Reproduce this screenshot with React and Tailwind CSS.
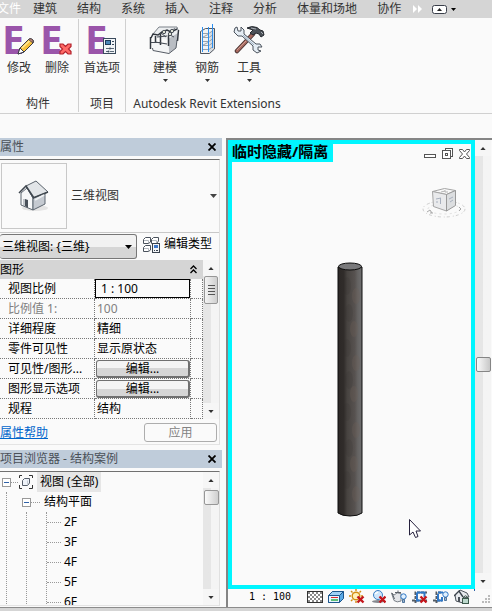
import { useState } from 'react'
import clsx from 'clsx'

const MENU_TABS = ['建筑', '结构', '系统', '插入', '注释', '分析', '体量和场地', '协作']

const FLOORS = ['2F', '3F', '4F', '5F', '6F']

const PROPERTIES = [
  { label: '视图比例', value: '1 : 100', type: 'input' },
  { label: '比例值 1:', value: '100', type: 'disabled' },
  { label: '详细程度', value: '精细', type: 'text' },
  { label: '零件可见性', value: '显示原状态', type: 'text' },
  { label: '可见性/图形...', value: '编辑...', type: 'button' },
  { label: '图形显示选项', value: '编辑...', type: 'button' },
  { label: '规程', value: '结构', type: 'text' },
]

/* ---------- ribbon icons ---------- */

function LetterE({ children }) {
  return (
    <svg width="32" height="32" viewBox="0 0 32 32" className="overflow-visible" aria-hidden="true">
      <text x="-1" y="30" fontSize="40" fontWeight="700" fontFamily="Noto Sans, sans-serif" fill="#9a55aa">E</text>
      {children}
    </svg>
  )
}

function ModifyIcon() {
  return (
    <LetterE>
      <path d="M15 30 L17 24 L26 15 Q28 14 30 16 Q31 18 30 19 L21 28 Z" fill="#f7c13c" stroke="#3b3b45" />
      <path d="M15 30 L17 24 L21 28 Z" fill="#fff" stroke="#3b3b45" />
      <path d="M19 24 L27 16.500" stroke="#fde89a" strokeWidth="1.500" />
      <path d="M26 15 Q28 14 30 16 L30 19 L25.500 15.500 Z" fill="#c98a78" stroke="#3b3b45" strokeWidth="0.800" />
    </LetterE>
  )
}

function DeleteIcon() {
  return (
    <LetterE>
      <path d="M19 20 L22 20 L24.500 22.500 L27 20 L30 20 L30 22.500 L27.500 25 L30 27.500 L30 30 L27 30 L24.500 27.500 L22 30 L19 30 L19 27.500 L21.500 25 L19 22.500 Z" fill="#ff6a66" stroke="#b3222c" strokeWidth="1.200" />
    </LetterE>
  )
}

function PreferenceIcon() {
  return (
    <LetterE>
      <rect x="17.500" y="14.500" width="12" height="15" fill="#f2f5f8" stroke="#3a4a5c" />
      <rect x="19.500" y="16.500" width="5" height="4" fill="#4a86b8" stroke="#1d3c5a" />
      <path d="M26 17.500h2M26 20.500h2" stroke="#3a4a5c" />
      <path d="M20 24.500h3M25 24.500h3M20 27.500h2M24 27.500h4" stroke="#5c6b7a" />
      <circle cx="24" cy="24.500" r="1" fill="#3a4a5c" />
      <circle cx="22.500" cy="27.500" r="1" fill="#3a4a5c" />
    </LetterE>
  )
}

function ModelIcon() {
  return (
    <svg width="32" height="32" viewBox="0 0 32 32" fill="none" aria-hidden="true">
      <path d="M3 12 L9 3 L28 3 L28 12 L19 16 Z" fill="#eceef0" />
      <path d="M19 15 L29 9 L27 24 L20 29 Z" fill="#b9bdc3" />
      <path d="M2 18 L19 19 L20 29 L4 26 Z" fill="#f4f5f6" />
      <path d="M4 10 L10 3 H28 L29 6 M20 9 L26 4" stroke="#7b8189" />
      <path d="M2 14 L4 10 L9 11 L13 8 L18 6 L22 8 L28 5" stroke="#32373f" strokeWidth="1.500" />
      <path d="M1.500 13 V25 M6.500 12 V19 M11.500 10 V21 M19.500 11 V22 M29.500 6 L28.500 17" stroke="#32373f" strokeWidth="1.500" />
      <path d="M2 18.500 H12 M6 18 L18 20 M8 13 L18 12" stroke="#454b54" strokeWidth="1.200" />
      <path d="M12 9 L17 13 M19 10 L25 13" stroke="#454b54" />
      <circle cx="15" cy="8" r="1.700" fill="#dfe2d4" stroke="#4b515a" />
      <circle cx="21" cy="10" r="1.700" fill="#dfe2d4" stroke="#4b515a" />
      <circle cx="23" cy="7" r="1.700" fill="#dfe2d4" stroke="#4b515a" />
      <path d="M3.500 24 L4 26.500 L20 29.500 L27 24 L28 16" stroke="#565c65" />
    </svg>
  )
}

function RebarIcon() {
  return (
    <svg width="32" height="32" viewBox="0 0 32 32" fill="none" aria-hidden="true">
      <path d="M9.500 7.500 L14.500 4.500 H23.500 V25 L18.500 29.500 H9.500 Z" fill="#f1f3f5" />
      <path d="M18.500 8 L23.500 4.500 V25 L18.500 29.500 Z" fill="#d7dbdf" />
      <path d="M9.500 29.500 V7.500 L14.500 4.500 H23.500 V25 L18.500 29.500 H9.500" stroke="#50565f" />
      <path d="M12 9.500h6l4-3M12 13.500h6l4-3M12 17.500h6l4-3M12 21.500h6l4-3M12 25.500h6l4-3M12 13l6-3M12 21l6-3" stroke="#9aa3ad" />
      <path d="M11.500 3 V28 M17.500 3 V28 M21.500 0 V24" stroke="#2c8ff0" />
    </svg>
  )
}

function ToolsIcon() {
  return (
    <svg width="32" height="32" viewBox="0 0 32 32" fill="none" aria-hidden="true">
      <path d="M4 27 L20 10" stroke="#43302f" strokeWidth="4.500" strokeLinecap="round" />
      <path d="M4 27 L20 10" stroke="#a7695f" strokeWidth="2.800" strokeLinecap="round" />
      <path d="M4 26 L13 17" stroke="#d09c91" />
      <path d="M14 4 Q19 1.500 24 3.500 L27 6 L30 7 L31 11 L28 13 L26 10 L23 9 L20 11 L17 9 L20 6 Z" fill="#4c5158" stroke="#25292f" />
      <path d="M18 4 L23 5 M28 8 L30 10" stroke="#aab0b6" />
      <path d="M1 8 L2 4 L4 3 L5 7 L8 7 L8 3 L11 6 L11 10 L23 20 L27 20 L29 23 L25 23 L25 26 L28 27 L24 29 L20 26 L20 22 L9 12 L5 12 Z" fill="#e5edf4" stroke="#4a525c" strokeLinejoin="round" />
      <path d="M10 11 L21 21" stroke="#9db0c2" />
    </svg>
  )
}

/* ---------- panel icons ---------- */

function HouseIcon() {
  return (
    <svg width="32" height="32" viewBox="0 0 32 32" aria-hidden="true">
      <ellipse cx="17" cy="28" rx="13" ry="3" fill="#e4e4e4" />
      <path d="M3 13 L9 8 L15 18 L15 30 L3 25 Z" fill="#f7f8f9" stroke="#5d6670" />
      <path d="M15 18 L27 11 L27 24 L15 30 Z" fill="#c5cad1" stroke="#5d6670" />
      <path d="M8 6 L18 1 L30 12 L15 18 Z" fill="#e2e5e8" stroke="#5a626b" />
      <path d="M1 13 L8 6 L16 18" fill="none" stroke="#3f474f" strokeWidth="1.500" />
      <path d="M15 18 L30 12" stroke="#3f474f" strokeWidth="1.500" />
      <path d="M7 19 L10 20 L10 28 L7 26 Z" fill="#49515a" />
      <path d="M6 19 V26" stroke="#8e959d" />
      <path d="M17 20 L26 15" stroke="#eef0f2" strokeWidth="2" />
    </svg>
  )
}

function EditTypeIcon() {
  return (
    <svg width="17" height="17" viewBox="0 0 17 17" fill="none" aria-hidden="true">
      <path d="M0.500 3.500 L2.500 1.500 H7.500 V6 L5.500 7.500 H0.500 Z M8.500 3.500 L10.500 1.500 H15.500 V5 L13.500 7.500 H8.500 Z M0.500 11.500 L2.500 9.500 H7.500 V14 L5.500 15.500 H0.500 Z" fill="#fff" stroke="#4a525c" />
      <path d="M1 4.500 H5.500 V7 M9 4.500 H13.500 V7 M1 12.500 H5.500 V15" stroke="#b4b9bf" />
      <rect x="9.500" y="7.500" width="7" height="9" fill="#f3f5f8" stroke="#39424e" />
      <rect x="11" y="9" width="4" height="3" fill="#3f78c8" />
      <path d="M11 14.500h1M13 14.500h2" stroke="#39424e" />
    </svg>
  )
}

function ViewsIcon() {
  return (
    <svg width="16" height="16" viewBox="0 0 16 16" fill="none" aria-hidden="true">
      <path d="M1.500 4V1.500H4 M11 1.500H14.500V4 M14.500 11V14.500H11 M4 14.500H1.500V11" stroke="#333" />
      <path d="M4.500 6.500 L6.500 4.500 H11.500 V9 L9.500 11.500 H4.500 Z" fill="#eef2f8" stroke="#545c68" />
      <path d="M9.500 6.500V11" stroke="#c6ccd4" />
    </svg>
  )
}

/* ---------- view icons ---------- */

function ViewCube() {
  return (
    <svg className="absolute top-[42px] right-1" width="46" height="34" viewBox="0 0 46 34" fill="none" aria-hidden="true">
      <ellipse cx="23" cy="23" rx="21" ry="8" stroke="#cecece" strokeDasharray="3 2 1 3" />
      <ellipse cx="23" cy="23" rx="16" ry="5" stroke="#dedede" strokeDasharray="2 3" />
      <path d="M6 26l3-2 2 3M9 27h3M38 21l2 2-2 2" stroke="#a8a8a8" />
      <path d="M11.500 5.500 L23.500 2.500 L34.500 4.500 L25.500 8.500 Z" fill="#f8f8f8" stroke="#a5a5a5" />
      <path d="M11.500 5.500 L25.500 8.500 V25 L12.500 20.500 Z" fill="#e9eaec" stroke="#a5a5a5" />
      <path d="M34.500 4.500 L25.500 8.500 V25 L34.500 19.500 Z" fill="#dcdee0" stroke="#999" />
      <path d="M15 13l5-1M19.500 12v6M16 17v-2M28 13l4-2M29 16l3-2" stroke="#a8b0be" />
      <path d="M20 6l4-1M24 4v2h3" stroke="#b5b5b5" />
    </svg>
  )
}

function Column() {
  return (
    <svg className="absolute top-[118px] left-[105px]" width="26" height="255" viewBox="0 0 26 255" role="img" aria-label="column">
      <defs>
        <linearGradient id="concrete" x1="0" x2="1" y1="0" y2="0">
          <stop offset="0" stopColor="#2c2826" />
          <stop offset="0.240" stopColor="#302c2a" />
          <stop offset="0.380" stopColor="#474340" />
          <stop offset="0.700" stopColor="#575250" />
          <stop offset="0.820" stopColor="#656362" />
          <stop offset="1" stopColor="#6f6f70" />
        </linearGradient>
      </defs>
      <path d="M1 5 V251 Q5 254 13 254 Q21 254 25 251 V5 Z" fill="url(#concrete)" stroke="#0c0c0c" />
      <g fill="#6e6058" opacity="0.300">
        {[34, 67, 101, 132, 168, 202, 232].map((y, i) => (
          <ellipse key={y} cx={i % 2 ? 17 : 19} cy={y} rx="4" ry="8" />
        ))}
      </g>
      <g fill="#2f2b29" opacity="0.120">
        {[24, 51, 86, 118, 150, 186, 218].map((y, i) => (
          <ellipse key={y} cx={i % 2 ? 12 : 10} cy={y} rx="4" ry="9" />
        ))}
      </g>
      <ellipse cx="13" cy="4.500" rx="11.500" ry="3.500" fill="#79797b" stroke="#0c0c0c" />
    </svg>
  )
}

function Cursor() {
  return (
    <svg className="absolute top-[375px] left-[177px]" width="13" height="20" viewBox="0 0 13 20" aria-hidden="true">
      <path d="M0.500 0.500 V16 L4 13 L6.500 18.500 L9 17.500 L7 12 H11.500 Z" fill="#fff" stroke="#25203c" />
    </svg>
  )
}

function MinimizeIcon() {
  return (
    <svg width="13" height="13" viewBox="0 0 13 13" aria-hidden="true">
      <rect x="0.500" y="6.500" width="11" height="3" fill="#fff" stroke="#555" />
    </svg>
  )
}

function RestoreIcon() {
  return (
    <svg width="12" height="13" viewBox="0 0 12 13" fill="#fff" stroke="#555" aria-hidden="true">
      <rect x="3.500" y="0.500" width="7" height="8" />
      <rect x="0.500" y="2.500" width="8" height="8" />
      <rect x="3.500" y="5.500" width="2" height="2" />
    </svg>
  )
}

function CloseViewIcon() {
  return (
    <svg width="12" height="13" viewBox="0 0 12 13" aria-hidden="true">
      <path d="M0.500 1.500 H3.500 L5.500 4 L7.500 1.500 H10.500 V2.500 L7.500 6 L10.500 9.500 V10.500 H7.500 L5.500 8 L3.500 10.500 H0.500 V9.500 L3.500 6 L0.500 2.500 Z" fill="#fff" stroke="#555" />
    </svg>
  )
}

function RedCross({ x = 8, y = 7 }) {
  return (
    <path
      transform={`translate(${x} ${y})`}
      d="M0.500 0.500 L6.500 6.500 M6.500 0.500 L0.500 6.500"
      stroke="#c4161c"
      strokeWidth="2.400"
    />
  )
}

function Bulb({ x = 9, y = 3 }) {
  return (
    <g transform={`translate(${x} ${y})`}>
      <circle cx="3.500" cy="3.500" r="2.700" fill="#dff0ff" stroke="#2f76c4" />
      <path d="M2.500 6.500h2v3h-2z" fill="#9cb4cc" stroke="#2f5c8c" strokeWidth="0.800" />
    </g>
  )
}

const VIEW_CONTROLS = [
  {
    name: '详细程度',
    icon: (
      <>
        <rect x="0.500" y="2.500" width="15" height="11" fill="#fff" stroke="#333" />
        {[4, 6, 8, 10, 12].map((y, i) => (
          <path key={y} d={`M${i % 2 ? 3 : 1} ${y}H15`} stroke="#8a8a8a" strokeWidth="2" strokeDasharray="2 2" />
        ))}
      </>
    ),
  },
  {
    name: '视觉样式',
    icon: (
      <>
        <path d="M0.500 6.500 L4.500 2.500 H15.500 V9.500 L11.500 13.500 H0.500 Z" fill="#5aa9e6" stroke="#1d568c" />
        <path d="M0.500 6.500 L4.500 2.500 H15.500 L11.500 6.500 Z" fill="#9fd0f5" stroke="#1d568c" />
        <path d="M0.500 6.500 H11.500 V13.500 H0.500 Z" fill="#e8f4ff" stroke="#1d568c" />
        <path d="M3 8.500 H10" stroke="#e0282c" />
        <path d="M3 11 H10" stroke="#2fae4a" strokeWidth="1.500" />
      </>
    ),
  },
  {
    name: '日光路径',
    icon: (
      <>
        <circle cx="7" cy="7" r="3.800" fill="#fff1b8" stroke="#d28d12" strokeWidth="1.400" />
        <path d="M7 0v2M7 12v2M0 7h2M12 7h2M2 2l1.500 1.500M12 2l-1.500 1.500M2 12l1.500-1.500" stroke="#d28d12" strokeWidth="1.400" />
        <RedCross />
      </>
    ),
  },
  {
    name: '阴影',
    icon: (
      <>
        <ellipse cx="8" cy="12.500" rx="6" ry="1.500" fill="#85898f" />
        <circle cx="8" cy="6" r="4.500" fill="#cfe6fb" stroke="#3b7fc4" />
        <path d="M5 5 L8 3" stroke="#fff" strokeWidth="1.500" />
        <RedCross x={9} />
      </>
    ),
  },
  {
    name: '渲染',
    icon: (
      <>
        <path d="M0.500 4 L3 6 Q6 2.500 10 4.500 V12 Q6 14 3 11.500 Z" fill="#e4e6e9" stroke="#7b8188" />
        <path d="M4 3.500 h6 M7 1.500v2 M1 4 l2.500 6" stroke="#5b6168" />
        <Bulb x={9} y={4} />
      </>
    ),
  },
  {
    name: '裁剪视图',
    icon: (
      <>
        <path d="M0 11.500 H15 M3.500 14 V3.500 H15" stroke="#555c64" strokeWidth="2" strokeDasharray="3 1" fill="none" />
        <path d="M5 3.500 H12.500 V8 M5 3.500 V11.500 H8" stroke="#2f78c8" strokeWidth="2" fill="none" />
        <RedCross />
      </>
    ),
  },
  {
    name: '显示裁剪区域',
    icon: (
      <>
        <path d="M0 11.500 H9 M3.500 14 V3.500 H9" stroke="#555c64" strokeWidth="2" strokeDasharray="3 1" fill="none" />
        <path d="M5 3.500 H10 M5 5 V11.500 H9 V8" stroke="#2f78c8" strokeWidth="2" fill="none" />
        <Bulb x={9} y={2} />
      </>
    ),
  },
  {
    name: '锁定三维视图',
    icon: (
      <>
        <path d="M1 6 L6 1 L13 4 L15 8 L9 9 L9 14 L2 12 Z" fill="#e7eaed" stroke="#4b525a" />
        <path d="M0 7 L5 2 L9 8" stroke="#3d444c" strokeWidth="1.400" fill="none" />
        <rect x="4" y="8" width="2" height="5" fill="#4b525a" />
        <path d="M9.500 9 V8 Q11.500 5.500 13.500 8 V9" stroke="#3c5a4c" fill="none" />
        <rect x="8.500" y="9.500" width="6" height="5" fill="#bcd8cc" stroke="#3c5a4c" />
      </>
    ),
  },
]

/* ---------- shared parts ---------- */

function Caret({ up = false, className = 'h-1 w-[7px]' }) {
  return (
    <svg viewBox="0 0 7 4" className={clsx('shrink-0', className)} aria-hidden="true">
      <path d={up ? 'M0 4 L3.500 0 L7 4 Z' : 'M0 0 L3.500 4 L7 0 Z'} fill="currentColor" />
    </svg>
  )
}

function ScrollBar({ className, children }) {
  return (
    <div className={clsx('flex w-4 shrink-0 flex-col bg-linear-to-r from-[#e6e6e6] from-50% to-[#f4f4f4] to-50% text-[#333]', className)}>
      <button type="button" aria-label="向上滚动" className="flex h-4 w-full shrink-0 items-center justify-center bg-[#f6f6f6]">
        <Caret up className="h-[3px] w-[6px]" />
      </button>
      <div className="flex min-h-0 flex-1 flex-col items-center">{children}</div>
      <button type="button" aria-label="向下滚动" className="flex h-4 w-full shrink-0 items-center justify-center bg-[#f6f6f6]">
        <Caret className="h-[3px] w-[6px]" />
      </button>
    </div>
  )
}

function PanelTitle({ children }) {
  return (
    <div className="flex h-[18px] shrink-0 items-center justify-between bg-[#bfccda] pr-[6px] text-[#4a5058]">
      <h2>{children}</h2>
      <button type="button" aria-label="关闭">
        <svg width="8" height="8" viewBox="0 0 8 8" aria-hidden="true">
          <path d="M0.500 0.500 L7.500 7.500 M7.500 0.500 L0.500 7.500" stroke="#000" strokeWidth="1.800" />
        </svg>
      </button>
    </div>
  )
}

function RibbonGroup({ title, className, children }) {
  return (
    <section className={clsx('mt-px flex flex-col items-center', className)}>
      <div className="flex flex-1">{children}</div>
      <h2 className="h-4 leading-4 whitespace-nowrap">{title}</h2>
    </section>
  )
}

function RibbonButton({ icon, label, menu, className }) {
  return (
    <button type="button" className={clsx('flex flex-col items-center self-start pt-[5px]', className)}>
      {icon}
      <span className="mt-1 h-4 leading-4 whitespace-nowrap">{label}</span>
      {menu && <Caret className="mt-[3px] h-[3px] w-[5px]" />}
    </button>
  )
}

/* ---------- sections ---------- */

function MenuBar() {
  return (
    <nav className="flex h-[18px] shrink-0 items-center bg-[#d5d5d5] whitespace-nowrap text-[#333]">
      <button type="button" className="-ml-[3px] text-white">文件</button>
      <div className="ml-3 flex gap-5">
        {MENU_TABS.map((tab) => (
          <button type="button" key={tab}>{tab}</button>
        ))}
      </div>
      <button type="button" aria-label="更多" className="ml-3">
        <svg width="10" height="8" viewBox="0 0 10 8" fill="#fff" aria-hidden="true">
          <path d="M0 0 L4 4 L0 8 Z M5 0 L9 4 L5 8 Z" />
        </svg>
      </button>
      <button type="button" aria-label="最小化功能区" className="ml-[9px] flex items-center gap-1 text-black">
        <svg width="15" height="9" viewBox="0 0 15 9" aria-hidden="true">
          <rect x="0.500" y="0.500" width="14" height="8" rx="2" fill="#fff" stroke="#3a3f4a" />
          <path d="M5 6 L7.500 3 L10 6 Z" fill="#222" />
        </svg>
        <Caret className="h-[3px] w-[5px]" />
      </button>
    </nav>
  )
}

function Ribbon() {
  return (
    <div className="flex h-24 shrink-0 border-b border-[#d0d0d0] pb-px text-[#333]">
      <RibbonGroup title="构件" className="border-r border-[#d0d0d0] pr-[2px]">
        <RibbonButton icon={<ModifyIcon />} label="修改" className="w-[38px]" />
        <RibbonButton icon={<DeleteIcon />} label="删除" className="w-[38px]" />
      </RibbonGroup>
      <RibbonGroup title="项目" className="border-r border-[#d0d0d0]">
        <RibbonButton icon={<PreferenceIcon />} label="首选项" className="w-[46px]" />
      </RibbonGroup>
      <RibbonGroup title="Autodesk Revit Extensions" className="min-w-[162px] px-1">
        <RibbonButton icon={<ModelIcon />} label="建模" menu className="w-[42px]" />
        <RibbonButton icon={<RebarIcon />} label="钢筋" menu className="w-[42px]" />
        <RibbonButton icon={<ToolsIcon />} label="工具" menu className="w-[42px]" />
      </RibbonGroup>
    </div>
  )
}

function PropertyValue({ row, id }) {
  const [value, setValue] = useState(row.value)

  if (row.type === 'input') {
    return (
      <input
        id={id}
        value={value}
        onChange={(e) => setValue(e.target.value)}
        className="block h-[19px] w-full border border-black bg-transparent pl-[5px] outline-none"
      />
    )
  }
  if (row.type === 'button') {
    return (
      <button
        id={id}
        type="button"
        className="ml-px block h-[18px] w-[94px] rounded-[3px] border border-r-2 border-b-2 border-[#707070] bg-linear-to-b from-[#f4f4f4] from-50% to-[#d6d6d6] to-50% text-center leading-4"
      >
        {row.value}
      </button>
    )
  }
  return <span className={clsx('pl-[2px]', row.type === 'disabled' && 'text-[#808080]')}>{row.value}</span>
}

function PropertyTable() {
  return (
    <div className="flex">
      <div className="min-w-0 flex-1">
        <div className="flex h-[19px] items-center justify-between bg-[#d5d5d5] pr-[6px]">
          <h3>图形</h3>
          <svg width="7" height="9" viewBox="0 0 7 9" fill="none" stroke="#000" strokeWidth="1.300" aria-hidden="true">
            <path d="M0.500 4 L3.500 1 L6.500 4 M0.500 8 L3.500 5 L6.500 8" />
          </svg>
        </div>
        <table className="w-full table-fixed border-separate border-spacing-0">
          <tbody>
            {PROPERTIES.map((row, i) => (
              <tr key={row.label} className="h-5">
                <th
                  scope="row"
                  className={clsx(
                    'w-[95px] border-r border-b border-dotted border-[#777] p-0 pl-2 text-left font-normal whitespace-nowrap',
                    row.type === 'disabled' && 'text-[#808080]',
                  )}
                >
                  <label htmlFor={`prop-${i}`}>{row.label}</label>
                </th>
                <td className="border-r border-b border-dotted border-[#777] p-0">
                  <PropertyValue row={row} id={`prop-${i}`} />
                </td>
                <td className="w-3 border-r border-b border-dotted border-[#777] p-0" />
              </tr>
            ))}
          </tbody>
        </table>
      </div>
      <ScrollBar>
        <div className="flex h-7 w-[14px] flex-col items-center justify-center gap-[2px] rounded-xs border border-[#979797] bg-linear-to-r from-[#f4f4f4] to-[#cfcfcf]">
          <span className="h-px w-[7px] bg-[#555]" />
          <span className="h-px w-[7px] bg-[#555]" />
          <span className="h-px w-[7px] bg-[#555]" />
          <span className="h-px w-[7px] bg-[#555]" />
        </div>
      </ScrollBar>
    </div>
  )
}

function PropertiesPanel() {
  return (
    <section className="shrink-0">
      <PanelTitle>属性</PanelTitle>
      <div className="mt-[3px] mr-[2px] border-t border-r border-b border-t-[#707070] border-r-[#e0e0e0] border-b-[#e4e4e4]">
        <button type="button" className="flex w-full items-center border-b border-[#c8c8c8] py-[3px] pr-[2px] pl-px text-left text-[#333]">
          <span className="flex h-[66px] w-[66px] items-center justify-center border border-[#c8c8c8]">
            <HouseIcon />
          </span>
          <span className="ml-1 flex-1">三维视图</span>
          <Caret className="h-1 w-[7px] text-[#444]" />
        </button>
        <div className="flex h-[27px] items-start pt-px">
          <label className="relative flex items-center">
            <select
              aria-label="视图"
              className="h-[25px] w-[137px] appearance-none rounded-[3px] border border-l-0 border-[#777] bg-linear-to-b from-[#f2f2f2] from-50% to-[#d6d6d6] to-50% pl-[2px] outline-none"
            >
              <option>三维视图: {'{三维}'}</option>
            </select>
            <Caret className="pointer-events-none absolute right-[5px] h-1 w-[7px]" />
          </label>
          <button type="button" className="ml-[6px] flex h-5 items-center gap-1 whitespace-nowrap">
            <EditTypeIcon />
            编辑类型
          </button>
        </div>
        <PropertyTable />
        <div className="flex h-[25px] items-center justify-between pt-[2px] pr-[2px]">
          <a href="#help" className="text-[#0066cc] underline">属性帮助</a>
          <button type="button" disabled className="h-[19px] w-[73px] rounded-[3px] border border-[#adadad] leading-4 text-[#838383]">
            应用
          </button>
        </div>
      </div>
    </section>
  )
}

function Expander({ open, onToggle }) {
  return (
    <button
      type="button"
      aria-label={open ? '折叠' : '展开'}
      onClick={onToggle}
      className="flex h-[9px] w-[9px] shrink-0 items-center justify-center border border-[#999] bg-white"
    >
      <span className="h-px w-[5px] bg-[#2f62a8]" />
    </button>
  )
}

function ProjectBrowser() {
  const [open, setOpen] = useState(true)
  const [floorsOpen, setFloorsOpen] = useState(true)

  return (
    <section className="mt-[5px] flex min-h-0 flex-1 flex-col">
      <PanelTitle>项目浏览器 - 结构案例</PanelTitle>
      <div className="mt-[3px] mr-[2px] flex min-h-0 flex-1 border-t border-r border-b border-t-[#707070] border-r-[#e0e0e0] border-b-[#e4e4e4]">
        <div className="flex min-w-0 flex-1 flex-col overflow-hidden pl-[2px]">
          <div className="flex h-5 shrink-0 items-center">
            <Expander open={open} onToggle={() => setOpen(!open)} />
            <span className="w-[7px] border-t border-dotted border-[#999]" />
            <ViewsIcon />
            <span className="ml-[3px] bg-[#e6e6e6] px-[3px] leading-5">视图 (全部)</span>
          </div>
          {open && (
            <ul className="ml-1 flex-1 border-l border-dotted border-[#999] pl-[15px]">
              <li>
                <div className="flex h-5 items-center">
                  <Expander open={floorsOpen} onToggle={() => setFloorsOpen(!floorsOpen)} />
                  <span className="mr-1 w-[9px] border-t border-dotted border-[#999]" />
                  结构平面
                </div>
                {floorsOpen && (
                  <div className="ml-1 border-l border-dotted border-[#999] pl-[19px]">
                    <ul className="border-l border-dotted border-[#999]">
                      {FLOORS.map((floor) => (
                        <li key={floor} className="flex h-5 items-center gap-[3px]">
                          <span className="w-[14px] border-t border-dotted border-[#999]" />
                          {floor}
                        </li>
                      ))}
                    </ul>
                  </div>
                )}
              </li>
            </ul>
          )}
        </div>
        <ScrollBar>
          <div className="mt-[2px] h-[15px] w-[15px] rounded-xs border border-[#979797] bg-linear-to-r from-[#fafafa] to-[#cfcfcf]" />
        </ScrollBar>
      </div>
    </section>
  )
}

function ModelView() {
  return (
    <main className="ml-[4px] flex min-w-0 flex-1 flex-col border-t-2 border-l-2 border-[#858585]">
      <div className="flex min-h-0 flex-1">
        <div className="relative min-w-0 flex-1 overflow-hidden border-4 border-[#00f6ff]">
          <div className="flex items-start justify-between">
            <h1 className="-mt-1 bg-[#00f6ff] pr-[5px] text-[15px] leading-[22px] font-bold whitespace-nowrap text-black">
              临时隐藏/隔离
            </h1>
            <div className="flex gap-[5px] pt-1">
              <button type="button" aria-label="最小化"><MinimizeIcon /></button>
              <button type="button" aria-label="还原"><RestoreIcon /></button>
              <button type="button" aria-label="关闭视图"><CloseViewIcon /></button>
            </div>
          </div>
          <ViewCube />
          <Column />
          <Cursor />
        </div>
        <ScrollBar className="mr-px">
          <div className="my-auto h-[15px] w-[15px] rounded-xs border border-[#858585] bg-linear-to-r from-[#fafafa] to-[#c8c8c8]" />
        </ScrollBar>
      </div>
      <div className="flex h-[18px] shrink-0 items-center pb-[2px] pl-[21px]">
        <button type="button" className="font-['DejaVu_Sans_Mono',monospace] text-[10px] leading-4 whitespace-nowrap text-black">1 : 100</button>
        <div className="ml-4 flex gap-[5px]">
          {VIEW_CONTROLS.map((control) => (
            <button type="button" key={control.name} aria-label={control.name}>
              <svg width="16" height="16" viewBox="0 0 16 16" fill="none" aria-hidden="true">{control.icon}</svg>
            </button>
          ))}
        </div>
        <span className="ml-1 h-[2px] w-px self-start bg-[#2f62a8]" />
        <svg className="ml-auto shrink-0 self-end" width="10" height="10" viewBox="0 0 10 10" fill="#bbb" aria-hidden="true">
          <path d="M6 0h2v2h-2zM3 3h2v2h-2zM6 3h2v2h-2zM0 6h2v2h-2zM3 6h2v2h-2zM6 6h2v2h-2z" />
        </svg>
      </div>
    </main>
  )
}

export default function App() {
  return (
    <div className="flex h-screen flex-col overflow-hidden bg-[#fafafa] font-['Noto_Sans','Noto_Sans_CJK_SC',sans-serif] text-[12px] leading-4 text-black">
      <MenuBar />
      <Ribbon />
      <div className="mt-6 flex min-h-0 flex-1">
        <aside className="flex w-[222px] shrink-0 flex-col pb-px">
          <PropertiesPanel />
          <ProjectBrowser />
        </aside>
        <ModelView />
      </div>
      <footer className="h-1 shrink-0 border-t border-[#8c8c8c] bg-[#d5d5d5]" />
    </div>
  )
}
